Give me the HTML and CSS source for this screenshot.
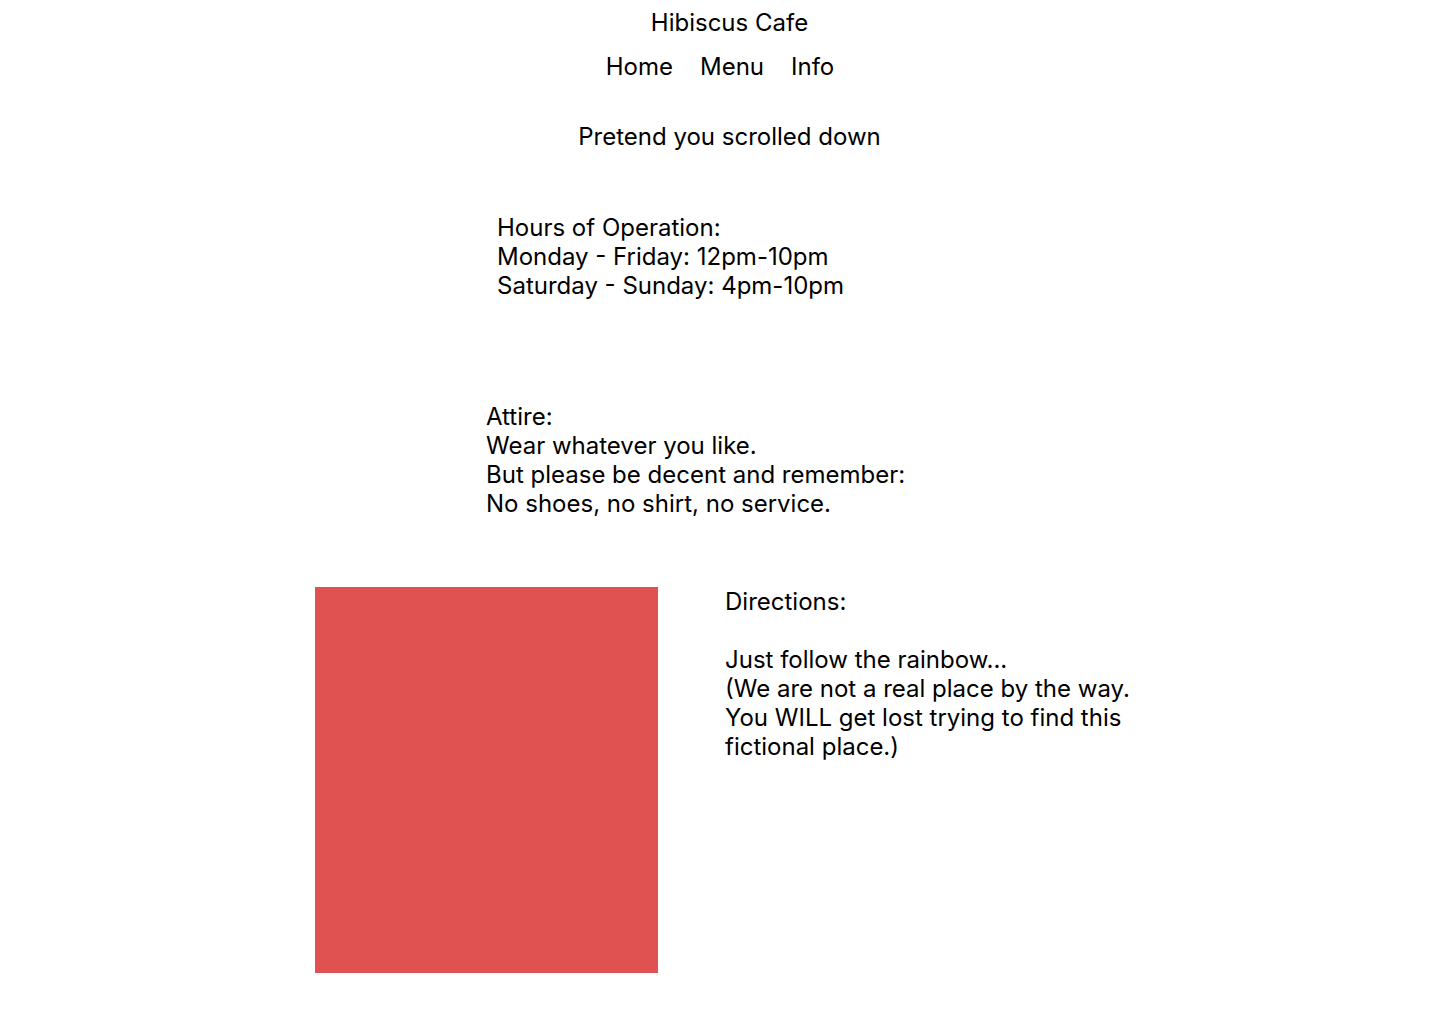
FILE: index.html
```html
<!DOCTYPE html>
<html lang="en">
<head>
<meta charset="utf-8">
<title>Hibiscus Cafe</title>
<link rel="stylesheet" href="styles.css">
</head>
<body>
<header class="header">
  <h1 class="title">Hibiscus Cafe</h1>
  <nav class="nav">
    <a class="nav-link" href="#">Home</a>
    <a class="nav-link" href="#">Menu</a>
    <a class="nav-link" href="#">Info</a>
  </nav>
</header>
<main class="main">
  <p class="scroll-note">Pretend you scrolled down</p>
  <section class="hours">
    Hours of Operation:<br>
    Monday - Friday: 12pm-10pm<br>
    Saturday - Sunday: 4pm-10pm
  </section>
  <section class="attire">
    Attire:<br>
    Wear whatever you like.<br>
    But please be decent and remember:<br>
    No shoes, no shirt, no service.
  </section>
  <section class="directions-row">
    <div class="map-box"></div>
    <div class="directions">
      Directions:<br><br>
      Just follow the rainbow...<br>
      (We are not a real place by the way. You WILL get lost trying to find this fictional place.)
    </div>
  </section>
</main>
</body>
</html>
```

FILE: styles.css
```css
* {
  box-sizing: border-box;
}

html, body {
  margin: 0;
  padding: 0;
  background: #ffffff;
}

body {
  font-family: "Inter", "Liberation Sans", sans-serif;
  font-size: 24px;
  line-height: 29px;
  color: #000000;
}

.header {
  display: flex;
  flex-direction: column;
  padding-top: 8px;
}

.title {
  margin: 0;
  font-size: 24px;
  font-weight: 400;
  line-height: 29px;
  text-align: center;
  padding-left: 19px;
}

.nav {
  display: flex;
  justify-content: center;
  gap: 27px;
  margin-top: 15px;
}

.nav-link {
  color: #000000;
  text-decoration: none;
}

.main {
  display: flex;
  flex-direction: column;
}

.scroll-note {
  margin: 41px 0 0 0;
  text-align: center;
  padding-left: 19px;
}

.hours {
  margin-top: 62px;
  margin-left: 497px;
}

.attire {
  margin-top: 102px;
  margin-left: 486px;
}

.directions-row {
  display: flex;
  align-items: flex-start;
  gap: 67px;
  margin-top: 69px;
  padding-left: 315px;
  padding-bottom: 51px;
}

.map-box {
  width: 343px;
  height: 386px;
  background: #e05252;
  flex: none;
}

.directions {
  width: 412px;
}
```
